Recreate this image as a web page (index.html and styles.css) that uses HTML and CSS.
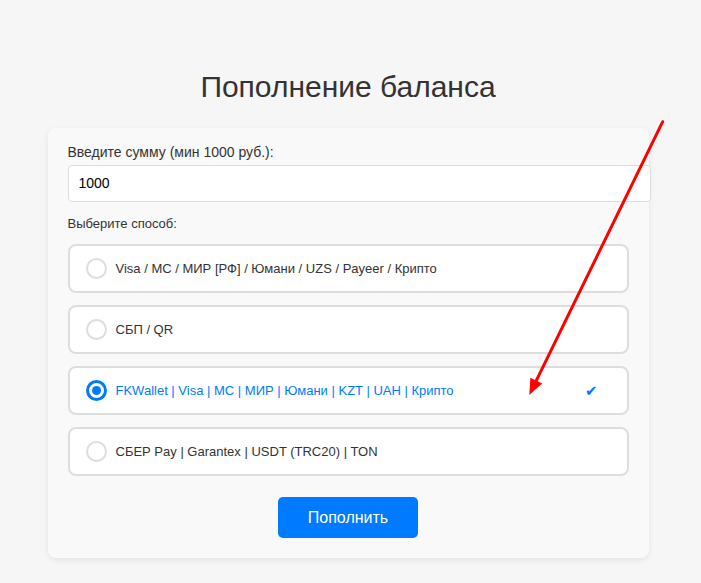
FILE: index.html
```html
<!DOCTYPE html>
<html lang="ru">
<head>
<meta charset="utf-8">
<title>Пополнение баланса</title>
<link rel="stylesheet" href="styles.css">
</head>
<body>
<div class="page">
  <h1 class="title">Пополнение баланса</h1>
  <form class="card">
    <label class="label label-amount" for="amount">Введите сумму (мин 1000 руб.):</label>
    <input class="amount" id="amount" type="text" value="1000">
    <div class="label label-method">Выберите способ:</div>
    <div class="options">
      <div class="option"><span class="radio"></span><span class="option-text">Visa / MC / МИР [РФ] / Юмани / UZS / Payeer / Крипто</span></div>
      <div class="option"><span class="radio"></span><span class="option-text">СБП / QR</span></div>
      <div class="option option-selected"><span class="radio"></span><span class="option-text">FKWallet | Visa | MC | МИР | Юмани | KZT | UAH | Крипто</span><span class="check">✔</span></div>
      <div class="option"><span class="radio"></span><span class="option-text">СБЕР Pay | Garantex | USDT (TRC20) | TON</span></div>
    </div>
    <button class="submit" type="button">Пополнить</button>
  </form>
</div>
<svg class="arrow" width="701" height="583" viewBox="0 0 701 583" xmlns="http://www.w3.org/2000/svg">
  <line x1="662.7" y1="121.7" x2="536.3" y2="380.6" stroke="#ff0000" stroke-width="3" stroke-linecap="round"/>
  <polygon points="529.3,395 542.2,383.5 530.4,377.8" fill="#ff0000"/>
</svg>
</body>
</html>
```
FILE: styles.css
```css
html, body {
  margin: 0;
  padding: 0;
}
body {
  background: #f6f6f6;
  font-family: "Liberation Sans", Arial, sans-serif;
  color: #333;
  padding-right: 5px;
  min-height: 583px;
  position: relative;
}
.page {
  max-width: 601px;
  margin: 0 auto;
  padding-top: 70px;
}
.title {
  margin: 0 0 24px;
  font-size: 30px;
  line-height: 34px;
  font-weight: normal;
  text-align: center;
  color: #333;
}
.card {
  background: #f9f9f9;
  border-radius: 8px;
  box-shadow: 0 2px 6px rgba(0, 0, 0, 0.08);
  padding: 16px 20px 20px;
  display: flex;
  flex-direction: column;
}
.label {
  display: block;
  font-size: 14px;
  line-height: 16px;
  color: #333;
}
.label-amount {
  margin-bottom: 5px;
}
.amount {
  box-sizing: content-box;
  width: 100%;
  height: 15px;
  padding: 10px;
  margin: 0 0 14px;
  border: 1px solid #ddd;
  border-radius: 4px;
  background: #fff;
  font-family: "Liberation Sans", Arial, sans-serif;
  font-size: 14px;
  line-height: 15px;
  color: #000;
  outline: none;
}
.label-method {
  font-size: 13px;
  margin-bottom: 12px;
}
.options {
  display: flex;
  flex-direction: column;
  gap: 12px;
}
.option {
  display: flex;
  align-items: center;
  height: 45px;
  padding: 0 16px;
  background: #fff;
  border: 2px solid #ddd;
  border-radius: 8px;
  font-size: 13px;
  color: #333;
}
.radio {
  box-sizing: border-box;
  width: 21px;
  height: 21px;
  border: 2px solid #ddd;
  border-radius: 50%;
  margin-right: 9px;
  flex: none;
  display: flex;
  align-items: center;
  justify-content: center;
  background: #fff;
}
.option-selected {
  color: #007bff;
}
.option-selected .radio {
  border: 3px solid #007bff;
}
.option-selected .radio::after {
  content: "";
  width: 9px;
  height: 9px;
  border-radius: 50%;
  background: #007bff;
}
.check {
  margin-left: auto;
  margin-right: 13px;
  font-size: 15px;
  font-family: "DejaVu Sans", sans-serif;
  color: #007bff;
}
.submit {
  align-self: center;
  margin-top: 21px;
  width: 140px;
  height: 41px;
  border: none;
  border-radius: 5px;
  background: #007bff;
  color: #fff;
  font-family: "Liberation Sans", Arial, sans-serif;
  font-size: 16px;
}
.arrow {
  position: absolute;
  left: 0;
  top: 0;
  pointer-events: none;
}
```
